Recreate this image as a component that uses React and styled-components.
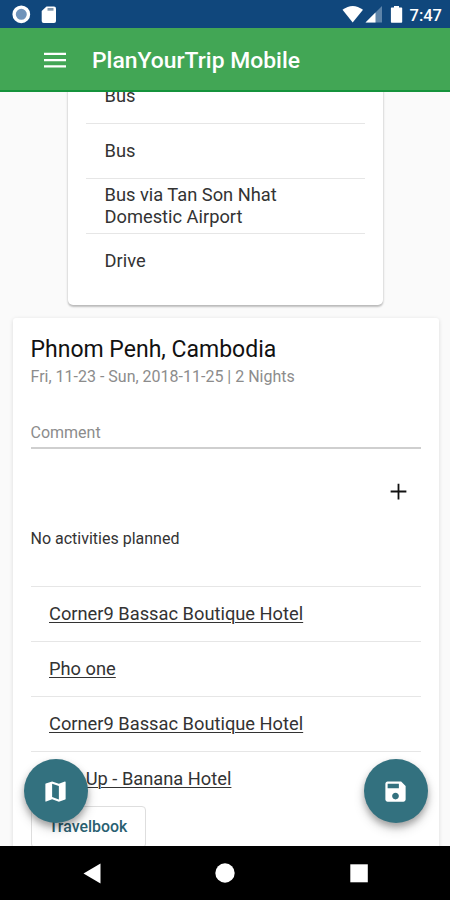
import React from "react";
import styled, { createGlobalStyle } from "styled-components";

const GlobalStyle = createGlobalStyle`
  * { box-sizing: border-box; }
  body { margin: 0; background: #fafafa; font-family: Roboto, sans-serif; }
`;

const Screen = styled.div`
  position: relative;
  display: flex;
  flex-direction: column;
  width: 450px;
  height: 900px;
  overflow: hidden;
  background: #fafafa;
  color: #222;
`;

const StatusBar = styled.div`
  flex: none;
  display: flex;
  justify-content: space-between;
  height: 28px;
  background: #10477c;
`;

const AppBar = styled.header`
  flex: none;
  display: flex;
  align-items: center;
  gap: 26px;
  height: 64px;
  padding: 3px 0 0 44px;
  background: #42a655;
  border-bottom: 2px solid #15933c;
`;

const AppTitle = styled.h1`
  margin: 0;
  color: #fff;
  font-size: 22.9px;
  font-weight: 500;
  line-height: 30px;
`;

const Content = styled.main`
  flex: 1;
  min-height: 0;
  overflow: hidden;
`;

const TransportCard = styled.section`
  width: 315px;
  height: 237px;
  margin: -24px 0 0 68px;
  padding: 0 18px;
  background: #fff;
  border-radius: 5px;
  box-shadow: 0 2px 2px rgba(0, 0, 0, 0.22), 0 0 3px rgba(0, 0, 0, 0.12);
`;

const StopCard = styled.section`
  width: 426px;
  height: 620px;
  margin: 13px 0 0 12.5px;
  padding: 18px 18px 0;
  background: #fff;
  border-radius: 3px;
  box-shadow: 0 1px 4px rgba(0, 0, 0, 0.13);
`;

const Row = styled.div`
  display: flex;
  align-items: center;
  height: 54.9px;
  padding: 0 18px 0 18.5px;
  border-top: 1.5px solid ${(p) => (p.$plain ? "transparent" : "#e6e6e6")};
  color: #333;
  font-size: 18.3px;
  line-height: 22px;
`;

const PlaceLink = styled.a`
  color: #333;
  text-decoration: underline;
  text-decoration-thickness: 1px;
  text-underline-offset: 2px;
`;

const StopTitle = styled.h2`
  margin: 0;
  color: #111;
  font-size: 23px;
  font-weight: 400;
  line-height: 28px;
  white-space: nowrap;
`;

const StopDates = styled.p`
  margin: 3px 0 0;
  color: #8c8c8c;
  font-size: 16px;
  line-height: 20px;
  white-space: nowrap;
`;

const CommentField = styled.div`
  height: 62px;
  padding-top: 36px;
  border-bottom: 2px solid #cfcfcf;
  color: #8c8c8c;
  font-size: 16px;
  line-height: 20px;
`;

const AddRow = styled.div`
  display: flex;
  justify-content: flex-end;
  height: 80px;
  padding: 29px 9px 0 0;
`;

const EmptyText = styled.p`
  height: 57px;
  margin: 0;
  color: #333;
  font-size: 16px;
  line-height: 20px;
`;

const OutlineButton = styled.button`
  width: 115px;
  height: 42px;
  padding: 0;
  background: #fff;
  border: 1px solid #dedede;
  border-radius: 4px;
  color: #2a6071;
  font: 500 15.9px/36px Roboto, sans-serif;
`;

const Fab = styled.button`
  position: absolute;
  top: 759px;
  ${(p) => (p.$side === "left" ? "left: 23.5px;" : "right: 22.5px;")}
  display: flex;
  align-items: center;
  justify-content: center;
  width: 64px;
  height: 64px;
  padding: 0;
  border: 0;
  border-radius: 50%;
  background: #33717f;
  box-shadow: 0 4px 6px rgba(0, 0, 0, 0.26), 0 6px 12px rgba(0, 0, 0, 0.16);
`;

const NavBar = styled.nav`
  flex: none;
  height: 54px;
  background: #000;
`;

const Icon = ({ size = 27, color = "#fff", d }) => (
  <svg width={size} height={size} viewBox="0 0 24 24" fill={color}>
    <path d={d} />
  </svg>
);

const MENU = "M0 19h24v-2.500H0zM0 12.200h24V9.700H0zM0 2.900v2.500h24V2.900z";
const ADD = "M19 12.8h-6.2V19h-1.6v-6.2H5v-1.6h6.2V5h1.6v6.2H19z";
const MAP =
  "M20.5 3l-.16.03L15 5.1 9 3 3.36 4.9c-.21.07-.36.25-.36.48V20.500c0 .28.22.5.5.5l.16-.03L9 18.900l6 2.100 5.640-1.900c.21-.07.36-.25.36-.48V3.500c0-.28-.22-.5-.5-.5zM15 19l-6-2.110V5l6 2.110V19z";
const SAVE =
  "M17 3H5c-1.110 0-2 .9-2 2v14c0 1.100.89 2 2 2h14c1.100 0 2-.9 2-2V7l-4-4zm-5 16c-1.660 0-3-1.340-3-3s1.340-3 3-3 3 1.340 3 3-1.340 3-3 3zm3-10H5V5h10v4z";

const places = [
  "Corner9 Bassac Boutique Hotel",
  "Pho one",
  "Corner9 Bassac Boutique Hotel",
  "Pop Up - Banana Hotel",
];

export default function App() {
  return (
    <Screen>
      <GlobalStyle />
      <StatusBar>
        <svg width="80" height="28">
          <circle cx="21.300" cy="14.300" r="7.200" fill="#6f93ba" stroke="#fff" strokeWidth="3.400" />
          <path d="M46.500 6.500h7.500q2 0 2 2v12.500q0 2-2 2H43.700q-2 0-2-2V11z" fill="#fff" />
          <path d="M47.500 8h6v2.700h-6z" fill="#8298ad" />
        </svg>
        <svg width="120" height="28">
          <path d="M12.500 9.800Q22.700 2 33 9.800L22.700 22.500z" fill="#fff" />
          <path d="M52 6v16.500H35.500z" fill="#5d84a9" />
          <path d="M45.500 12.500v10h-10z" fill="#fff" />
          <path d="M64 6h5v1.500h2.500q.7 0 .7.700V22q0 .8-.8.800h-9.700q-.8 0-.8-.8V8.200q0-.7.700-.7H64z" fill="#fff" />
          <text x="79.500" y="21" fill="#fff" fontFamily="Roboto, sans-serif" fontSize="16.500" fontWeight="500">7:47</text>
        </svg>
      </StatusBar>
      <AppBar>
        <Icon size={22} d={MENU} />
        <AppTitle>PlanYourTrip Mobile</AppTitle>
      </AppBar>
      <Content>
        <TransportCard>
          <Row $plain>Bus</Row>
          <Row>Bus</Row>
          <Row>Bus via Tan Son Nhat Domestic Airport</Row>
          <Row>Drive</Row>
        </TransportCard>
        <StopCard>
          <StopTitle>Phnom Penh, Cambodia</StopTitle>
          <StopDates>Fri, 11-23 - Sun, 2018-11-25 | 2 Nights</StopDates>
          <CommentField>Comment</CommentField>
          <AddRow>
            <Icon d={ADD} color="#111" />
          </AddRow>
          <EmptyText>No activities planned</EmptyText>
          {places.map((place, i) => (
            <Row key={i}>
              <PlaceLink>{place}</PlaceLink>
            </Row>
          ))}
          <OutlineButton>Travelbook</OutlineButton>
        </StopCard>
      </Content>
      <Fab $side="left" aria-label="Map">
        <Icon d={MAP} />
      </Fab>
      <Fab $side="right" aria-label="Save">
        <Icon d={SAVE} />
      </Fab>
      <NavBar>
        <svg width="450" height="54" fill="#fff">
          <path d="M83.500 27.500L100.500 17.500v20z" />
          <circle cx="225" cy="27" r="9.700" />
          <path d="M350.300 18.300h17.500v18h-17.500z" />
        </svg>
      </NavBar>
    </Screen>
  );
}
